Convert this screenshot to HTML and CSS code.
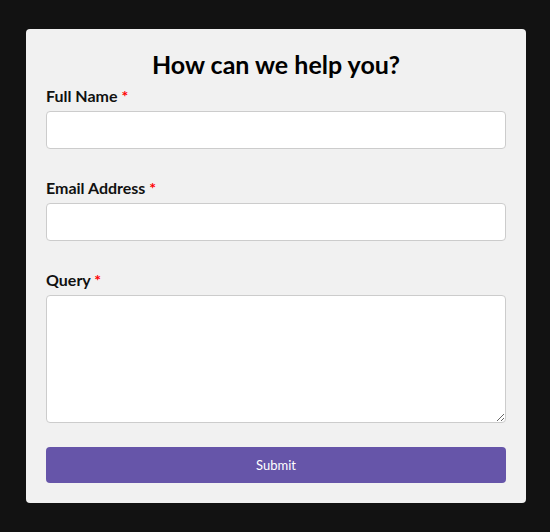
FILE: index.html
```html
<!DOCTYPE html>
<html>
<head>
<meta charset="utf-8">
<link rel="stylesheet" href="styles.css">
</head>
<body>
<form class="card">
  <h2 class="title">How can we help you?</h2>
  <div class="field">
    <label class="label">Full Name <span class="req">*</span></label>
    <input class="input" type="text">
  </div>
  <div class="field">
    <label class="label">Email Address <span class="req">*</span></label>
    <input class="input" type="email">
  </div>
  <div class="field field-last">
    <label class="label">Query <span class="req">*</span></label>
    <textarea class="textarea"></textarea>
  </div>
  <button class="submit" type="button">Submit</button>
</form>
</body>
</html>
```
FILE: styles.css
```css
html, body {
  margin: 0;
  background: #121212;
  font-family: Lato, "Open Sans", sans-serif;
}
body {
  padding: 29px 24px 29px 26px;
}
.card {
  box-sizing: border-box;
  width: 500px;
  background: #f1f1f1;
  border-radius: 4px;
  padding: 20px 20px 20px;
  display: flex;
  flex-direction: column;
}
.title {
  margin: 0 0 7px;
  text-align: center;
  font-size: 25px;
  line-height: 30px;
  font-weight: 700;
  color: #000;
}
.field {
  display: flex;
  flex-direction: column;
  gap: 5px;
  margin-bottom: 29px;
}
.field-last {
  margin-bottom: 24px;
}
.label {
  font-size: 16px;
  line-height: 20px;
  font-weight: 700;
  color: #111;
}
.req {
  color: #ff0000;
}
.input, .textarea {
  box-sizing: border-box;
  width: 100%;
  border: 1px solid #cccccc;
  border-radius: 4px;
  background: #fff;
  margin: 0;
  font-family: inherit;
}
.input {
  height: 38px;
}
.textarea {
  height: 128px;
  display: block;
}
.submit {
  height: 36px;
  border: none;
  border-radius: 4px;
  background: #6655a9;
  color: #fff;
  font-family: inherit;
  font-size: 13px;
  margin: 0;
}
```
